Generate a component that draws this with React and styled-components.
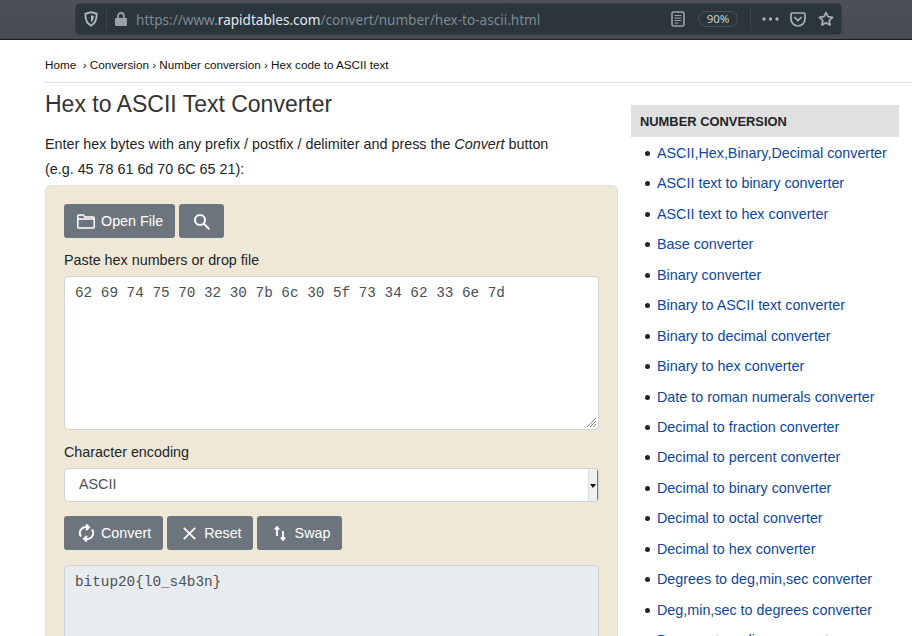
import React from "react";
import styled, { createGlobalStyle } from "styled-components";

const Global = createGlobalStyle`
  html, body { margin: 0; padding: 0; background: #fff; }
  body { font-family: "Liberation Sans", Arial, sans-serif; color: #212529; width: 912px; height: 636px; overflow: hidden; }
  * { box-sizing: border-box; }
`;
const Page = styled.div`width: 912px; height: 636px; overflow: hidden; display: flex; flex-direction: column;`;
const Chrome = styled.header`
  height: 40px; flex: none; padding: 4px 71px 5px 76px;
  background: linear-gradient(#4d5157, #474b51); border-bottom: 1px solid #1c2024;
`;
const UrlBar = styled.div`
  height: 30px; border-radius: 4px; background: #2a353c; display: flex; align-items: center; padding: 0 7px 0 8px;
  box-shadow: 0 0 0 1px rgba(30,36,40,.35);
`;
const Sep = styled.span`width: 1px; height: 22px; background: #3b464d; margin: ${p => p.$m};`;
const Url = styled.div`
  font-family: "Noto Sans", sans-serif; font-size: 13.57px; color: #7f8a90; flex: 1; white-space: nowrap; margin-left: 9px;
  b { font-weight: 400; color: #e6e9eb; }
`;
const Zoom = styled.span`
  width: 40px; height: 16px; border: 1px solid #48535a; border-radius: 8px; color: #c9d3da; font: 11.5px/14px "Noto Sans", sans-serif; text-align: center; margin-left: 13px;
`;
const Ico = styled.svg`display: block; flex: none; margin: ${p => p.$m || 0};`;
const Crumbs = styled.nav`
  margin-left: 45px; height: 43px; border-bottom: 1px solid #e0e0e0; font-size: 11.7px; padding-top: 18px; line-height: 13px; color: #111; flex: none; white-space: pre;
`;
const Columns = styled.div`display: flex; flex: 1; padding-left: 45px; min-height: 0;`;
const Main = styled.main`width: 573px; flex: none;`;
const Title = styled.h1`font-size: 23px; font-weight: 400; line-height: 28px; margin: 7px 0 14px; color: #333;`;
const Intro = styled.p`font-size: 14.33px; line-height: 25px; margin: 0 0 3px; color: #212529;`;
const Card = styled.section`
  background: #efe8d6; border: 1px solid #e3e0d6; border-bottom: 0; border-radius: 6px 6px 0 0; padding: 18px 18px 0; height: 480px;
`;
const Buttons = styled.div`display: flex; gap: 4px; margin-top: ${p => p.$top || 0}px;`;
const Btn = styled.button`
  height: 34px; border: 0; border-radius: 3px; background: #6c757d; color: #fff; display: flex; align-items: center; gap: ${p => p.$gap}px;
  font: 14.33px "Liberation Sans", sans-serif; padding: 0 ${p => p.$r}px 0 ${p => p.$l}px; margin: 0;
`;
const Label = styled.label`display: block; font-size: 14.33px; line-height: 20px; color: #212529; margin: 12px 0 6px;`;
const Area = styled.div`
  position: relative; height: ${p => p.$h}px; width: 535px; border: 1px solid #ced4da; border-radius: 4px; background: ${p => p.$bg || "#fff"};
  margin-top: ${p => p.$top || 0}px;
  padding: 7px 10px; font: 14.33px/19px "Liberation Mono", monospace; color: #495057; white-space: pre;
`;
const Grip = styled.svg`position: absolute; right: 1px; bottom: 1px;`;
const Select = styled.div`
  height: 34px; width: 535px; border: 1px solid #ced4da; border-radius: 4px; background: #fff; display: flex; font-size: 14.33px; color: #495057; overflow: hidden;
`;
const SelectText = styled.span`flex: 1; padding-left: 14px; line-height: 31px;`;
const SelectArrow = styled.span`
  width: 10px; background: #f0f0f0; border-left: 1px solid #e0e0e0; border-right: 1px solid #777; display: flex; align-items: center; justify-content: center;
  &::after { content: ""; border: 3px solid transparent; border-top: 4px solid #111; border-bottom: 0; margin-top: 2px; }
`;
const Side = styled.aside`width: 268px; margin-left: 13px; flex: none; padding-top: 22px;`;
const SideHead = styled.div`
  background: #e0e0e0; height: 32px; padding: 1px 0 0 9px; font-size: 12.9px; font-weight: 700; line-height: 32px; color: #212529;
`;
const List = styled.ul`margin: 0; padding: 1px 0 0 26px; list-style: none;`;
const Item = styled.li`
  position: relative; height: 30.45px; line-height: 30.45px; font-size: 14.33px; color: #212529; white-space: nowrap;
  &::before { content: ""; position: absolute; left: -12px; top: 13px; width: 5px; height: 5px; border-radius: 50%; background: #212529; }
`;
const Link = styled.a`color: #0d47a1; text-decoration: none;`;

const links = ["ASCII,Hex,Binary,Decimal converter","ASCII text to binary converter","ASCII text to hex converter","Base converter","Binary converter","Binary to ASCII text converter","Binary to decimal converter","Binary to hex converter","Date to roman numerals converter","Decimal to fraction converter","Decimal to percent converter","Decimal to binary converter","Decimal to octal converter","Decimal to hex converter","Degrees to deg,min,sec converter","Deg,min,sec to degrees converter","Degrees to radians converter"];

export default function App() {
  return (
    <Page>
      <Global />
      <Chrome>
        <UrlBar>
          <Ico width="14" height="16" viewBox="0 0 14 16" fill="none" stroke="#b4bbc0" strokeWidth="1.8"><path d="M7 1.2 L12.6 2.8 C12.8 8 11.5 12.3 7 14.8 C2.5 12.3 1.200 8 1.4 2.8Z"/><path d="M7 4.200 L9.800 5 C9.800 8 9 10 7 11.300Z" fill="#b4bbc0" stroke="none"/></Ico>
          <Sep $m="0 7px 0 8px" />
          <Ico width="12" height="14" viewBox="0 0 12 14" $m="0 0 0 1px"><path d="M3 6V4a3 3 0 0 1 6 0v2" fill="none" stroke="#9aa2a8" strokeWidth="1.8"/><rect x="0" y="6" width="12" height="8" rx="1" fill="#9aa2a8"/></Ico>
          <Url>https://www.<b>rapidtables.com</b>/convert/number/hex-to-ascii.html</Url>
          <Ico width="14" height="16" viewBox="0 0 14 16" fill="none"><rect x="1" y="1" width="12" height="14" rx="1.5" stroke="#9aa2a8" strokeWidth="1.6"/><path d="M3.500 4.500h7M3.500 7h7M3.500 9.500h7M3.500 12h4" stroke="#9aa2a8"/></Ico>
          <Zoom>90%</Zoom>
          <Sep $m="0 11px 0 12px" />
          <Ico width="17" height="4" viewBox="0 0 17 4" fill="#aab1b6"><circle cx="2" cy="2" r="1.7"/><circle cx="8.500" cy="2" r="1.7"/><circle cx="15" cy="2" r="1.7"/></Ico>
          <Ico width="16" height="15" viewBox="0 0 16 15" fill="none" stroke="#aab1b6" strokeWidth="1.7" $m="0 0 0 11px"><path d="M2 1h12a1 1 0 0 1 1 1v5a7 7 0 0 1-14 0V2a1 1 0 0 1 1-1z"/><path d="M4.800 5.500 8 8.600l3.200-3.100" strokeLinecap="round"/></Ico>
          <Ico width="16" height="16" viewBox="0 0 16 16" fill="none" stroke="#aab1b6" strokeWidth="1.7" $m="0 0 0 12px"><path d="M8 1.500l2 4.200 4.600.6-3.400 3.200.9 4.600L8 11.800l-4.100 2.300.9-4.600L1.400 6.300 6 5.700z" strokeLinejoin="round"/></Ico>
        </UrlBar>
      </Chrome>
      <Crumbs>Home  › Conversion › Number conversion › Hex code to ASCII text</Crumbs>
      <Columns>
        <Main>
          <Title>Hex to ASCII Text Converter</Title>
          <Intro>Enter hex bytes with any prefix / postfix / delimiter and press the <i>Convert</i> button<br />(e.g. 45 78 61 6d 70 6C 65 21):</Intro>
          <Card>
            <Buttons>
              <Btn $l={13} $r={12} $gap={6}>
                <Ico width="18" height="15" viewBox="0 0 18 15" fill="none" stroke="#fff" strokeWidth="1.5"><path d="M.8 13V2A1 1 0 0 1 1.800 1h4.500l1.500 2h8.400a1 1 0 0 1 1 1v9a1 1 0 0 1-1 1H1.800a1 1 0 0 1-1-1z"/><path d="M.8 5h16.400"/></Ico>
                Open File
              </Btn>
              <Btn $l={14} $r={14} $gap={0}>
                <Ico width="17" height="17" viewBox="0 0 17 17" fill="none" stroke="#fff" strokeWidth="2"><circle cx="7" cy="7" r="5"/><path d="M10.800 10.800 15.800 15.800" strokeLinecap="round"/></Ico>
              </Btn>
            </Buttons>
            <Label>Paste hex numbers or drop file</Label>
            <Area $h={154}>62 69 74 75 70 32 30 7b 6c 30 5f 73 34 62 33 6e 7d
              <Grip width="11" height="11" viewBox="0 0 11 11" stroke="#888"><path d="M1 10 10 1M4 10l6-6M7 10l3-3"/></Grip>
            </Area>
            <Label>Character encoding</Label>
            <Select><SelectText>ASCII</SelectText><SelectArrow /></Select>
            <Buttons $top={14}>
              <Btn $l={15} $r={12} $gap={7}>
                <Ico width="15" height="18" viewBox="0 0 15 18" fill="none" stroke="#fff" strokeWidth="2"><path d="M2 12.500A6 6 0 0 1 8.500 3.200M13 5.500A6 6 0 0 1 6.500 14.800"/><path d="M7 .5 10 3.200 7 6M8 12 5 14.800 8 17.500"/></Ico>
                Convert
              </Btn>
              <Btn $l={16} $r={11} $gap={8}>
                <Ico width="13" height="13" viewBox="0 0 13 13" stroke="#fff" strokeWidth="1.8"><path d="M.8.8l11.400 11.400M12.200.8.8 12.200"/></Ico>
                Reset
              </Btn>
              <Btn $l={17} $r={12} $gap={9}>
                <Ico width="12" height="15" viewBox="0 0 12 15" fill="none" stroke="#fff" strokeWidth="1.800"><path d="M3 10V1.200M.8 3.500 3 1l2.200 2.500M9 5v8.800M6.800 11.500 9 14l2.200-2.500"/></Ico>
                Swap
              </Btn>
            </Buttons>
            <Area $h={120} $bg="#e9ecef" $top={15}>bitup20{"{"}l0_s4b3n{"}"}</Area>
          </Card>
        </Main>
        <Side>
          <SideHead>NUMBER CONVERSION</SideHead>
          <List>{links.map(l => <Item key={l}><Link>{l}</Link></Item>)}</List>
        </Side>
      </Columns>
    </Page>
  );
}
